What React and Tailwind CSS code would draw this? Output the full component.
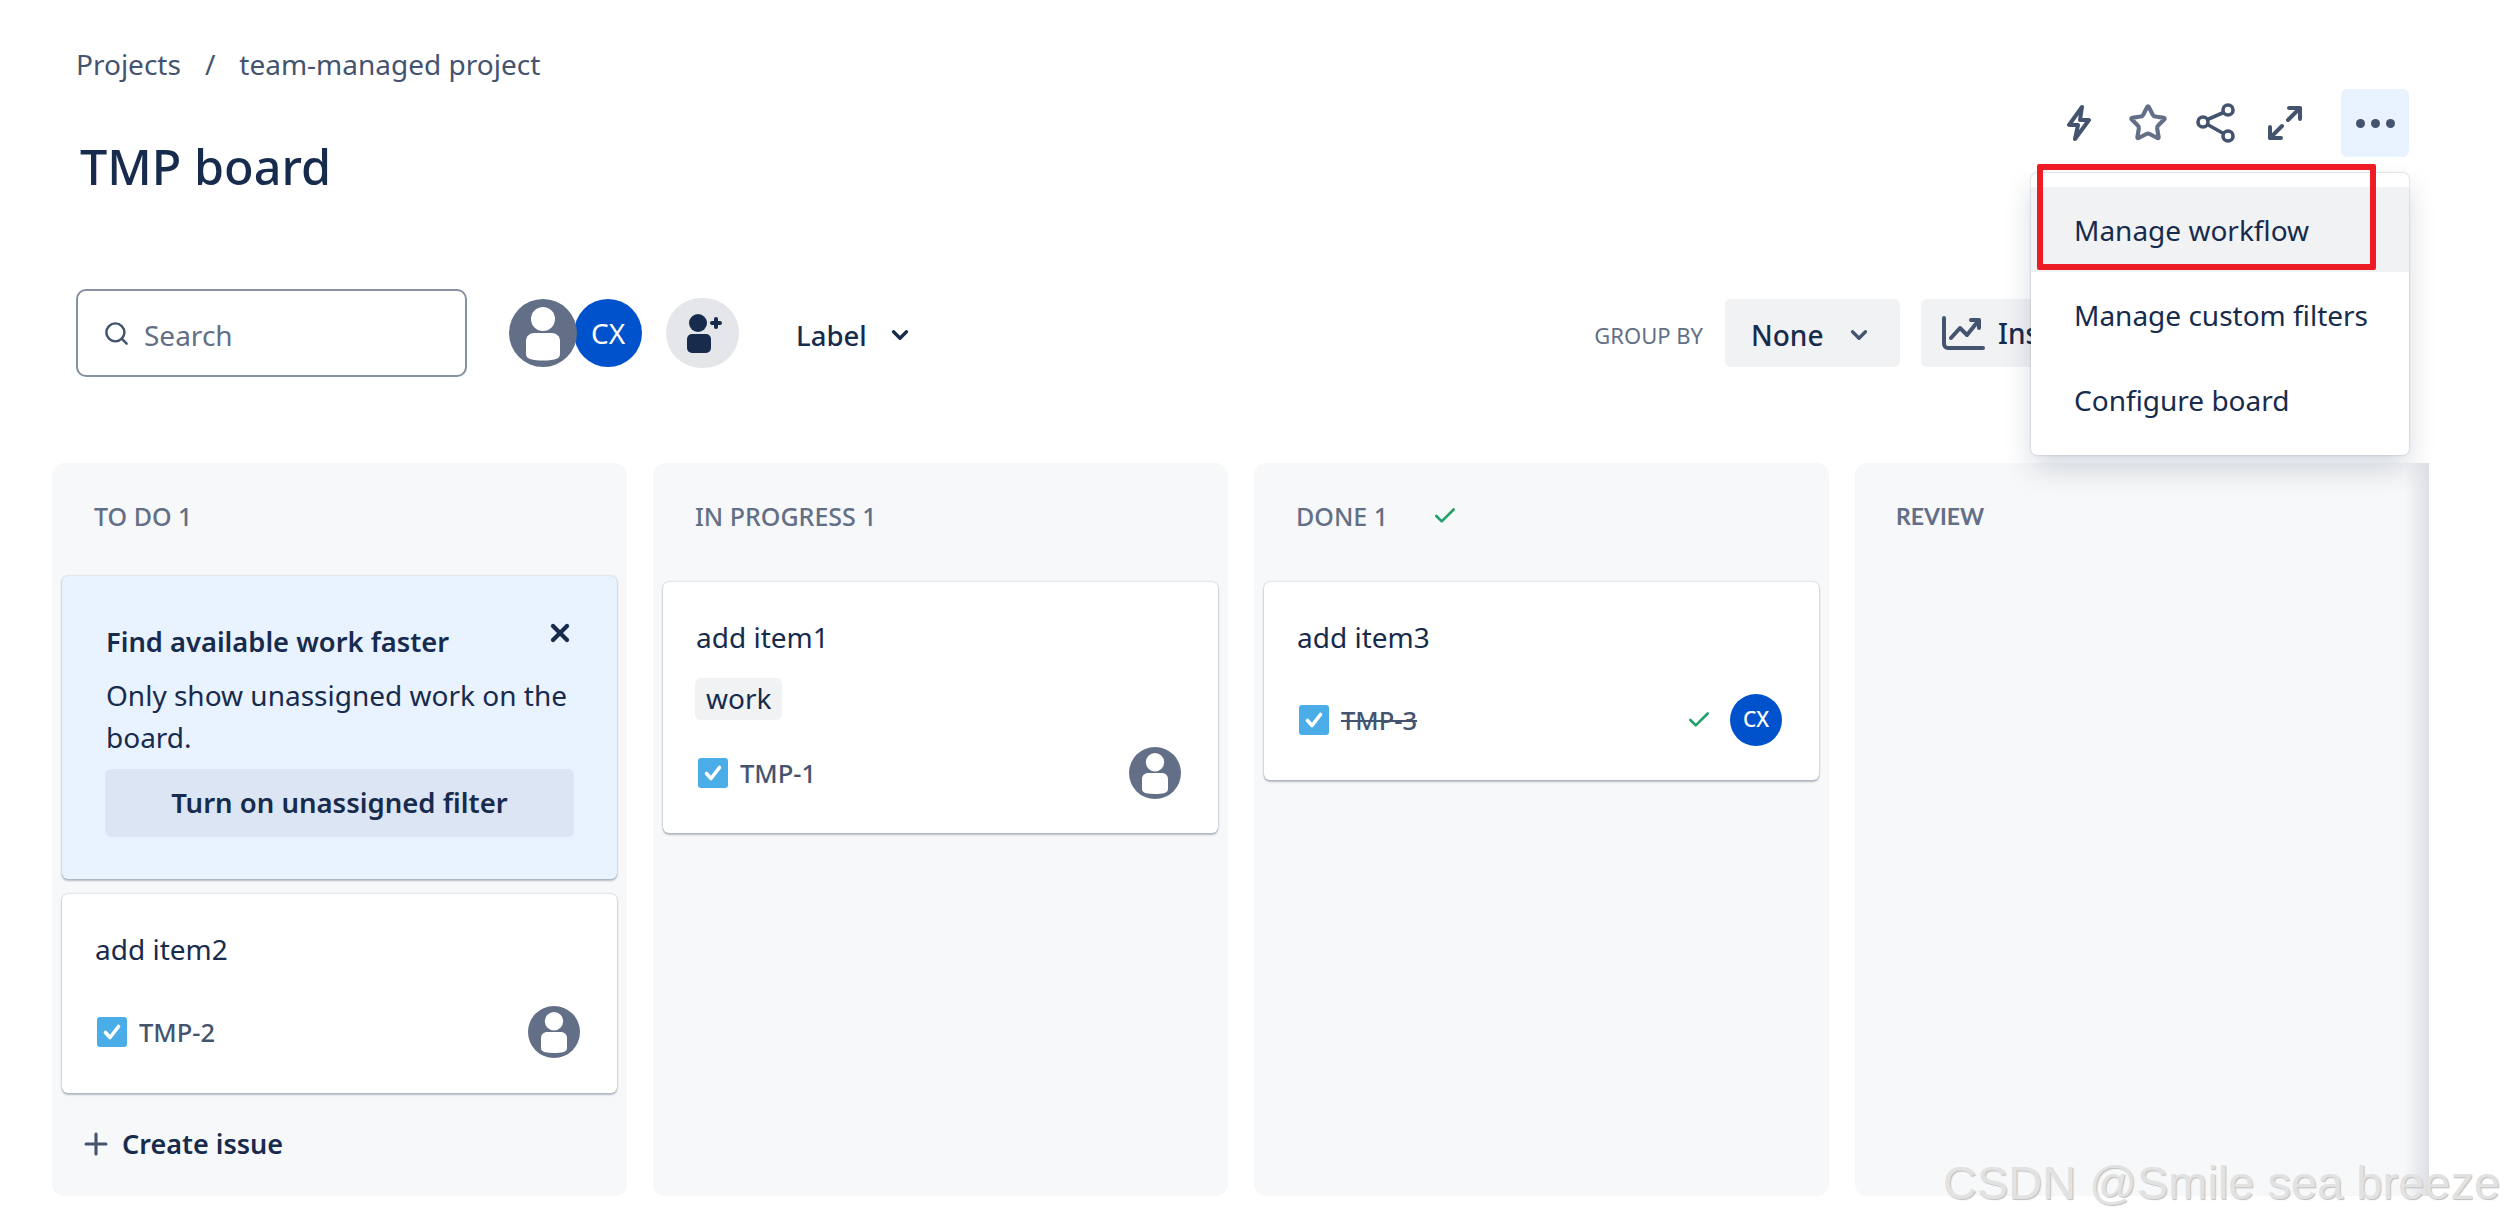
import React from "react";
import { ChevronDown, Plus, Search, Star, X, Check } from "lucide-react";

const PersonAvatar = ({ size = "w-[52px] h-[52px]", ring = false }) => (
  <svg viewBox="0 0 68 68" className={`${size} shrink-0 ${ring ? "relative z-10" : ""}`}>
    <circle cx="34" cy="34" r="34" fill="#626f86" />
    <circle cx="34" cy="20" r="12" fill="#fff" />
    <path d="M17 42c0-5 4-8 8-8h18c4 0 8 3 8 8v13c0 3-2 4-4 5-8 2-18 2-26 0-2-1-4-2-4-5z" fill="#fff" />
  </svg>
);

const TaskIcon = () => (
  <svg viewBox="0 0 30 30" className="w-[30px] h-[30px] shrink-0">
    <rect width="30" height="30" rx="3" fill="#4bade8" />
    <path d="M8.5 15.5l4.5 5 8.5-11" fill="none" stroke="#fff" strokeWidth="3.6" strokeLinecap="round" strokeLinejoin="round" />
  </svg>
);

const Card = ({ title, id, tag, done, children, className }) => (
  <div className={`bg-white rounded-md shadow-[0_2px_2px_rgba(9,30,66,0.25),0_0_2px_rgba(9,30,66,0.31)] pl-[33px] pr-[37px] ${className}`}>
    <div className="text-[28px] leading-[40px] text-[#172b4d] mt-[35px]">{title}</div>
    {tag && (
      <span className="inline-block mt-[21px] -ml-px px-[11px] h-[42px] leading-[40px] rounded-md bg-[#f1f2f4] text-[28px] text-[#172b4d]">
        {tag}
      </span>
    )}
    <div className={`flex items-center justify-between ${tag ? "mt-[27px]" : "mt-[37px]"}`}>
      <div className="flex items-center gap-[12px] pl-[2px]">
        <TaskIcon />
        <span className={`text-[25.500px] font-medium text-[#44546f] ${done ? "line-through" : ""}`}>{id}</span>
      </div>
      {children}
    </div>
  </div>
);

const Column = ({ title, check, lato, children }) => (
  <div className="w-[575px] h-[733px] shrink-0 rounded-xl bg-[#f7f8f9] px-[10px] flex flex-col">
    <div className={`h-[113px] pt-[36px] flex items-start text-[#626f86] ${lato ? "pl-[31px] font-['Lato',sans-serif] font-bold text-[23px]" : "pl-[32px] font-medium text-[25px]"} leading-[34px]`}>
      <span>{title}</span>
      {check && <Check size={26} strokeWidth={2.4} className="text-[#22a06b] ml-[44px] mt-[4px]" />}
    </div>
    {children}
  </div>
);

const App = () => {
  return (
    <div className="relative w-[2505px] h-[1224px] overflow-hidden bg-white font-['Noto_Sans',sans-serif] text-[#172b4d]">
      {/* top */}
      <div className="flex justify-between h-[289px]">
        <div className="pl-[76px] pt-[48px]">
          <div className="flex items-center h-[32px] text-[28px] text-[#44546f]">
            <span>Projects</span>
            <span className="mx-[24px]">/</span>
            <span>team-managed project</span>
          </div>
          <h1 className="mt-[56px] ml-[4px] h-[60px] text-[48.500px] leading-[60px] font-medium text-[#172b4d]">TMP board</h1>
        </div>

        <div className="flex items-center h-[68px] mt-[89px] mr-[96px]">
          <svg viewBox="0 0 26 36" className="w-[26px] h-[36px] text-[#44546f]">
            <path d="M16 2L3 20h9l-3 14 14-19h-9z" fill="none" stroke="currentColor" strokeWidth="4" strokeLinejoin="round" />
          </svg>
          <Star size={40} strokeWidth={2.5} className="text-[#626f86] ml-[36px]" />
          <svg viewBox="0 0 40 40" className="w-[40px] h-[40px] ml-[28px] text-[#44546f]" fill="none" stroke="currentColor" strokeWidth="3.6">
            <circle cx="32" cy="7" r="5" />
            <circle cx="32" cy="33" r="5" />
            <circle cx="7" cy="19" r="5" />
            <path d="M11.5 16.5L27.500 9.500M11.500 21.500l16 9" />
          </svg>
          <svg viewBox="0 0 36 36" className="w-[36px] h-[36px] ml-[31px] text-[#44546f]" fill="none" stroke="currentColor" strokeWidth="4" strokeLinecap="round" strokeLinejoin="round">
            <path d="M22 3h11v11M33 3L21 15M3 22v11h11M3 33l12-12" />
          </svg>
          <div className="ml-[38px] w-[68px] h-[68px] rounded-md bg-[#e9f2ff] flex items-center justify-center gap-[6px]">
            <span className="w-[9px] h-[9px] rounded-full bg-[#44546f]" />
            <span className="w-[9px] h-[9px] rounded-full bg-[#44546f]" />
            <span className="w-[9px] h-[9px] rounded-full bg-[#44546f]" />
          </div>
        </div>
      </div>

      {/* toolbar */}
      <div className="flex items-center h-[88px] pl-[76px] pr-[305px] mb-[86px]">
        <div className="w-[391px] h-[88px] rounded-[10px] border-2 border-[#8590a2] flex items-center pl-[25px] gap-[14px] text-[#626f86]">
          <Search size={27} strokeWidth={2.2} className="text-[#44546f]" />
          <span className="text-[28px] mt-[3px]">Search</span>
        </div>
        <div className="flex items-center ml-[42px]">
          <PersonAvatar size="w-[68px] h-[68px]" ring />
          <div className="-ml-[3px] w-[68px] h-[68px] rounded-full bg-[#0052cc] text-white text-[28px] flex items-center justify-center">CX</div>
        </div>
        <div className="ml-[24px] w-[73px] h-[70px] rounded-full bg-[#e4e6ea] flex items-center justify-center">
          <svg viewBox="0 0 40 40" className="w-[40px] h-[40px] text-[#172b4d]" fill="currentColor">
            <circle cx="15" cy="10" r="9" />
            <rect x="4" y="21" width="24" height="19" rx="5" />
            <rect x="27" y="8" width="12" height="4" rx="2" />
            <rect x="31" y="4" width="4" height="12" rx="2" />
          </svg>
        </div>
        <span className="ml-[57px] text-[27.500px] font-medium mt-[5px]">Label</span>
        <ChevronDown size={26} strokeWidth={3} className="ml-[20px] mt-[3px] text-[#172b4d]" />

        <div className="ml-auto flex items-center">
          <span className="text-[22px] text-[#626f86] mr-[22px] mt-[4px]">GROUP BY</span>
          <div className="w-[175px] h-[68px] rounded-md bg-[#f1f2f4] flex items-center pl-[26px] pt-[4px] text-[28px] font-medium">
            None
            <ChevronDown size={26} strokeWidth={3} className="ml-[23px] text-[#44546f]" />
          </div>
          <div className="ml-[21px] w-[279px] h-[68px] rounded-md bg-[#f1f2f4] flex items-center pl-[20px] text-[28px] font-medium">
            <svg viewBox="0 0 44 36" className="w-[44px] h-[36px] text-[#44546f]" fill="none" stroke="currentColor" strokeWidth="4" strokeLinecap="round" strokeLinejoin="round">
              <path d="M3 3v26a4 4 0 0 0 4 4h35" />
              <path d="M10 23l9-10 7 7 12-15M30 5h8v8" />
            </svg>
            <span className="ml-[13px]">Insights</span>
          </div>
        </div>
      </div>

      {/* board */}
      <div className="relative w-[2429px] h-[733px] overflow-hidden pl-[52px] flex gap-[26px]">
        <Column title="TO DO 1">
          <div className="rounded-md bg-[#e9f2ff] shadow-[0_2px_2px_rgba(9,30,66,0.25),0_0_2px_rgba(9,30,66,0.31)] h-[303px] pl-[44px] pr-[43px] relative">
            <div className="pt-[46px] text-[27.300px] leading-[40px] font-semibold">Find available work faster</div>
            <X size={28} strokeWidth={3.6} className="absolute right-[43px] top-[43px]" />
            <div className="mt-[12px] text-[28px] leading-[42px]">Only show unassigned work on the board.</div>
            <div className="mt-[11px] -ml-px h-[68px] rounded-md bg-[#dce5f3] flex items-center justify-center text-[27.500px] font-semibold">
              Turn on unassigned filter
            </div>
          </div>
          <Card title="add item2" id="TMP-2" className="mt-[15px] h-[199px]">
            <PersonAvatar />
          </Card>
          <div className="flex items-center mt-[31px] ml-[21px] text-[27px] font-semibold">
            <Plus size={34} strokeWidth={2.2} className="text-[#44546f] -ml-[4px]" />
            <span className="ml-[9px]">Create issue</span>
          </div>
        </Column>

        <Column title="IN PROGRESS 1">
          <Card title="add item1" id="TMP-1" tag="work" className="mt-[6px] h-[251px]">
            <PersonAvatar />
          </Card>
        </Column>

        <Column title="DONE 1" check>
          <Card title="add item3" id="TMP-3" done className="mt-[6px] h-[198px]">
            <div className="flex items-center">
              <Check size={26} strokeWidth={2.4} className="text-[#22a06b] mr-[18px]" />
              <div className="w-[52px] h-[52px] rounded-full bg-[#0052cc] text-white text-[21px] font-medium flex items-center justify-center">CX</div>
            </div>
          </Card>
        </Column>

        <Column title="REVIEW" lato />

        {/* scroll shadow at the right edge of the board */}
        <div className="absolute right-0 top-0 bottom-0 w-[24px] bg-gradient-to-r from-transparent to-[#dcdfe4]" />
      </div>

      {/* open menu */}
      <div className="absolute left-[2031px] top-[173px] w-[378px] h-[282px] py-[14px] rounded-md bg-white shadow-[0_14px_28px_rgba(9,30,66,0.16),0_0_2px_rgba(9,30,66,0.31)] text-[28px] text-[#172b4d]">
        <div className="h-[85px] pl-[43px] flex items-center bg-[#f1f2f4]">Manage workflow</div>
        <div className="h-[85px] pl-[43px] flex items-center">Manage custom filters</div>
        <div className="h-[85px] pl-[43px] flex items-center">Configure board</div>
      </div>

      {/* annotation */}
      <div className="absolute left-[2037px] top-[164px] w-[339px] h-[106px] border-[6px] border-[#ee1c25] rounded-[2px]" />

      {/* watermark */}
      <div className="absolute left-[1943px] top-[1155px] text-[47px] leading-[56px] font-['Liberation_Sans',sans-serif] text-[#e2e2e2] [text-shadow:1px_1px_1px_#bdbdbd] whitespace-nowrap">
        CSDN @Smile sea breeze
      </div>
    </div>
  );
};

export default App;
